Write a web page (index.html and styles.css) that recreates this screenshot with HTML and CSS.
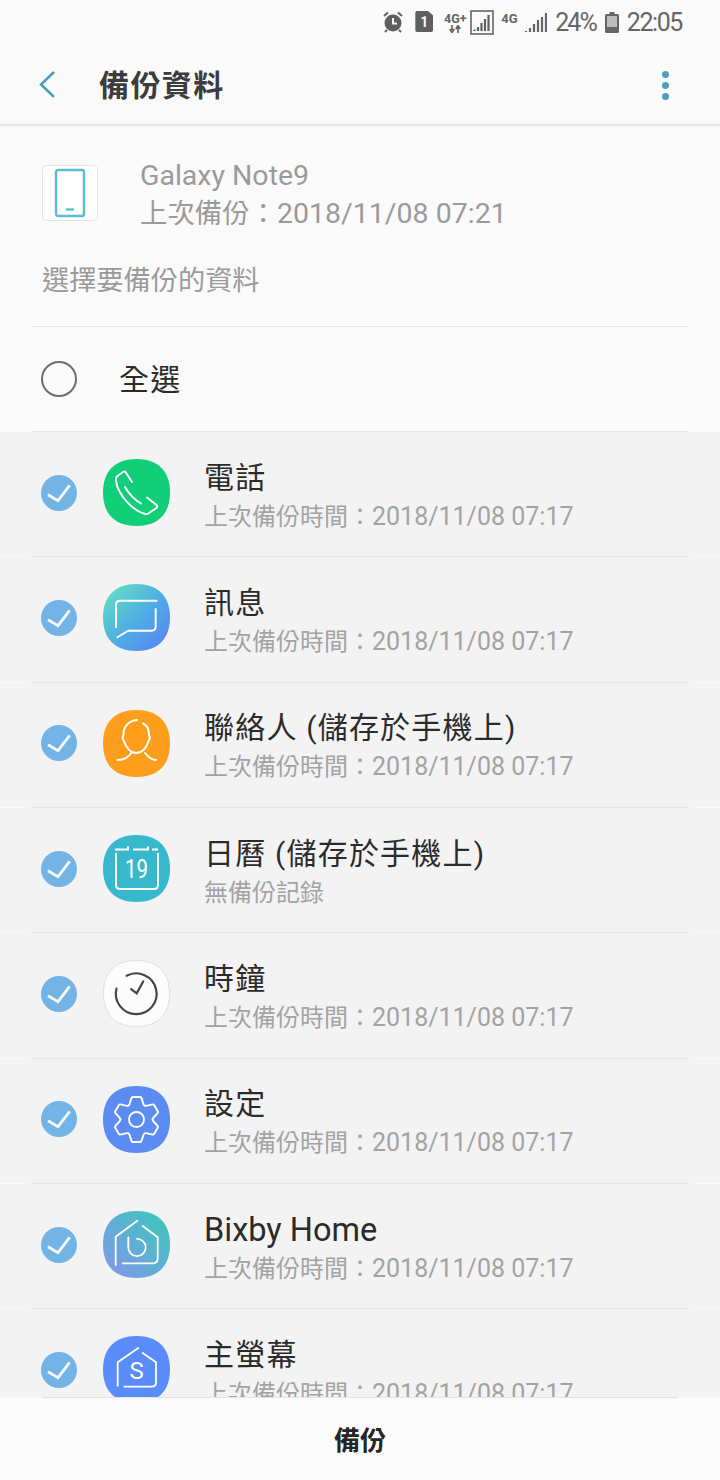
FILE: index.html
```html
<!DOCTYPE html>
<html lang="zh-Hant">

<head>
    <meta charset="UTF-8" />
    <meta name="viewport" content="width=device-width, initial-scale=1.0" />
    <title>備份資料</title>
    <link rel="stylesheet" href="styles.css">
</head>

<body>
    <div class="page">
        <div class="status-bar">
            <svg class="st-alarm" width="22" height="22" viewBox="0 0 22 22">
                <circle cx="11" cy="12" r="8.500" fill="#5f5f5f" />
                <path d="M2 5l4-3.500M20 5l-4-3.500M5 19l-2 2M17 19l2 2" stroke="#5f5f5f" stroke-width="2" fill="none" />
                <path d="M11 7v5.500h4" stroke="#fafafa" stroke-width="2" fill="none" />
            </svg>
            <span class="st-sim">1</span>
            <span class="st-net">
                <span class="st-net-label">4G+</span>
                <svg width="12" height="8" viewBox="0 0 12 8">
                    <path d="M3 0v5M0.800 4L3 7.500 5.200 4M9 8V3M6.800 4L9 0.500 11.200 4" stroke="#5f5f5f" stroke-width="1.600" fill="none" />
                </svg>
            </span>
            <svg class="st-box" width="24" height="25" viewBox="0 0 24 25">
                <rect x="1" y="1" width="22" height="23" fill="none" stroke="#666" stroke-width="1.600" />
                <path d="M4.500 21v-1.500M8 21v-4M11.500 21v-8M15 21V9M18.500 21V5" stroke="#5f5f5f" stroke-width="2.200" fill="none" />
            </svg>
            <span class="st-4g">4G</span>
            <svg class="st-bars" width="22" height="21" viewBox="0 0 22 21">
                <path d="M1 20v-1M5 20v-4M9 20v-8M13 20V8M17 20V5M21 20V1" stroke="#666" stroke-width="2.200" fill="none" />
            </svg>
            <span class="st-text st-pct">24%</span>
            <svg class="st-batt" width="14" height="21" viewBox="0 0 14 21">
                <path d="M4.500 0h5v2h3q1.500 0 1.500 1.500v16q0 1.500-1.500 1.500h-11q-1.500 0-1.500-1.500v-16q0-1.500 1.500-1.500h3z" fill="#666" />
                <rect x="2" y="4" width="10" height="11" fill="#bdbdbd" />
            </svg>
            <span class="st-text st-time">22:05</span>
        </div>

        <header class="app-bar">
            <svg class="back" width="20" height="30" viewBox="0 0 20 30">
                <path d="M16 2L3 14.500 16 27" stroke="#4c9dbd" stroke-width="2.500" fill="none" />
            </svg>
            <h1>備份資料</h1>
            <div class="more"><i></i><i></i><i></i></div>
        </header>

        <section class="summary">
            <div class="device">
                <div class="device-icon">
                    <svg width="32" height="50" viewBox="0 0 32 50">
                        <rect x="2" y="2" width="28" height="46" rx="2" fill="none" stroke="#5cbcd0" stroke-width="2.400" />
                        <path d="M12 41.500h8" stroke="#5cbcd0" stroke-width="2.400" />
                    </svg>
                </div>
                <div class="device-text">
                    <div class="latin">Galaxy Note9</div>
                    <div>上次備份：<span class="latin">2018/11/08 07:21</span></div>
                </div>
            </div>
            <p class="section-label">選擇要備份的資料</p>
            <div class="select-all">
                <span class="radio"></span>
                <span class="select-all-label">全選</span>
            </div>
        </section>

        <ul class="list">
            <li class="row">
                <div class="row-inner">
                    <svg class="check" width="36" height="36" viewBox="0 0 36 36"><circle cx="18" cy="18" r="18" fill="#73b3e6" /><path d="M7 19.700L17 25.700 28.700 10.300" stroke="#f4f9fd" stroke-width="2.800" fill="none" /></svg>
                    <svg class="app-icon" width="67" height="67" viewBox="0 0 67 67">
                        <path d="M33.500 0C55 0 67 12 67 33.500S55 67 33.500 67 0 55 0 33.500 12 0 33.500 0Z" fill="#10cf78" />
                        <path d="M29 23L22.500 13Q21.500 12 20 13L14.500 17Q12.500 18.500 13 22C15 36 30 52 42 55Q44.500 55.500 46 54L53.500 49Q55 47.500 53.500 46L44 38.500M22 28C26 35 32 41 38 44.500" stroke="#fff" stroke-width="1.900" fill="none" stroke-linecap="round" />
                    </svg>
                    <div class="row-text">
                        <div class="row-title">電話</div>
                        <div class="row-sub">上次備份時間：<span class="stamp">2018/11/08 07:17</span></div>
                    </div>
                </div>
            </li>
            <li class="row">
                <div class="row-inner">
                    <svg class="check" width="36" height="36" viewBox="0 0 36 36"><circle cx="18" cy="18" r="18" fill="#73b3e6" /><path d="M7 19.700L17 25.700 28.700 10.300" stroke="#f4f9fd" stroke-width="2.800" fill="none" /></svg>
                    <svg class="app-icon" width="67" height="67" viewBox="0 0 67 67">
                        <defs>
                            <linearGradient id="msgGrad" x1="0" y1="0" x2="1" y2="1">
                                <stop offset="0.100" stop-color="#60dcc4" />
                                <stop offset="0.550" stop-color="#4eaae6" />
                                <stop offset="1" stop-color="#5a80f0" />
                            </linearGradient>
                        </defs>
                        <path d="M33.500 0C55 0 67 12 67 33.500S55 67 33.500 67 0 55 0 33.500 12 0 33.500 0Z" fill="url(#msgGrad)" />
                        <path d="M53.700 16.700H17Q13 16.700 13 20.700V43.300M14.300 53.300L25.300 46.700H48.700Q52.700 46.700 52.700 42.300V25" stroke="#fff" stroke-width="1.900" fill="none" stroke-linecap="round" />
                    </svg>
                    <div class="row-text">
                        <div class="row-title">訊息</div>
                        <div class="row-sub">上次備份時間：<span class="stamp">2018/11/08 07:17</span></div>
                    </div>
                </div>
            </li>
            <li class="row">
                <div class="row-inner">
                    <svg class="check" width="36" height="36" viewBox="0 0 36 36"><circle cx="18" cy="18" r="18" fill="#73b3e6" /><path d="M7 19.700L17 25.700 28.700 10.300" stroke="#f4f9fd" stroke-width="2.800" fill="none" /></svg>
                    <svg class="app-icon" width="67" height="67" viewBox="0 0 67 67">
                        <path d="M33.500 0C55 0 67 12 67 33.500S55 67 33.500 67 0 55 0 33.500 12 0 33.500 0Z" fill="#fd9f1c" />
                        <path d="M34 10C26 10.500 20 17 20.500 25Q18.500 28 21 31C23 38 28 43 33 43C39 43 44 38 45.500 31Q48 28 46 25C46 20 44 15 40 13.500M14.500 50C21 50 26 47 29 42M42 43C45 47 48 50 53 50" stroke="#fff" stroke-width="1.900" fill="none" stroke-linecap="round" />
                    </svg>
                    <div class="row-text">
                        <div class="row-title">聯絡人 (儲存於手機上)</div>
                        <div class="row-sub">上次備份時間：<span class="stamp">2018/11/08 07:17</span></div>
                    </div>
                </div>
            </li>
            <li class="row">
                <div class="row-inner">
                    <svg class="check" width="36" height="36" viewBox="0 0 36 36"><circle cx="18" cy="18" r="18" fill="#73b3e6" /><path d="M7 19.700L17 25.700 28.700 10.300" stroke="#f4f9fd" stroke-width="2.800" fill="none" /></svg>
                    <svg class="app-icon" width="67" height="67" viewBox="0 0 67 67">
                        <path d="M33.500 0C55 0 67 12 67 33.500S55 67 33.500 67 0 55 0 33.500 12 0 33.500 0Z" fill="#38b8cc" />
                        <path d="M12 14.500H25V11.500M30 14.500H45V11.500M49 14.500H55M13 18V50Q13 54 17 54H51Q55 54 55 50V18" stroke="#fff" stroke-width="1.900" fill="none" />
                        <text class="icon-text" x="33.500" y="43.300" font-size="25" text-anchor="middle" textLength="23" lengthAdjust="spacingAndGlyphs" fill="#fff">19</text>
                    </svg>
                    <div class="row-text">
                        <div class="row-title">日曆 (儲存於手機上)</div>
                        <div class="row-sub">無備份記錄</div>
                    </div>
                </div>
            </li>
            <li class="row">
                <div class="row-inner">
                    <svg class="check" width="36" height="36" viewBox="0 0 36 36"><circle cx="18" cy="18" r="18" fill="#73b3e6" /><path d="M7 19.700L17 25.700 28.700 10.300" stroke="#f4f9fd" stroke-width="2.800" fill="none" /></svg>
                    <svg class="app-icon" width="67" height="67" viewBox="-0.500 -0.500 68 68">
                        <path d="M33.500 0C55 0 67 12 67 33.500S55 67 33.500 67 0 55 0 33.500 12 0 33.500 0Z" fill="#fcfcfc" stroke="#dedede" stroke-width="1" />
                        <path d="M23.500 15.500A20.700 20.700 0 1 1 13.200 28.500" stroke="#444" stroke-width="2.200" fill="none" stroke-linecap="round" />
                        <path d="M28 29L33.700 33.300 40.300 21.300" stroke="#444" stroke-width="2.200" fill="none" stroke-linecap="round" />
                    </svg>
                    <div class="row-text">
                        <div class="row-title">時鐘</div>
                        <div class="row-sub">上次備份時間：<span class="stamp">2018/11/08 07:17</span></div>
                    </div>
                </div>
            </li>
            <li class="row">
                <div class="row-inner">
                    <svg class="check" width="36" height="36" viewBox="0 0 36 36"><circle cx="18" cy="18" r="18" fill="#73b3e6" /><path d="M7 19.700L17 25.700 28.700 10.300" stroke="#f4f9fd" stroke-width="2.800" fill="none" /></svg>
                    <svg class="app-icon" width="67" height="67" viewBox="0 0 67 67">
                        <defs>
                            <path id="gearTooth" d="M25.500 19.500C27.500 18.500 27.500 11.500 29.500 11H37.500C39.500 11.500 39.500 18.500 41.500 19.500" stroke="#fff" stroke-width="1.900" fill="none" stroke-linecap="round" />
                        </defs>
                        <path d="M33.500 0C55 0 67 12 67 33.500S55 67 33.500 67 0 55 0 33.500 12 0 33.500 0Z" fill="#5c8cf2" />
                        <use href="#gearTooth" />
                        <use href="#gearTooth" transform="rotate(60 33.500 33.500)" />
                        <use href="#gearTooth" transform="rotate(120 33.500 33.500)" />
                        <use href="#gearTooth" transform="rotate(180 33.500 33.500)" />
                        <use href="#gearTooth" transform="rotate(240 33.500 33.500)" />
                        <use href="#gearTooth" transform="rotate(300 33.500 33.500)" />
                        <circle cx="33.500" cy="33.500" r="7.500" stroke="#fff" stroke-width="1.900" fill="none" />
                    </svg>
                    <div class="row-text">
                        <div class="row-title">設定</div>
                        <div class="row-sub">上次備份時間：<span class="stamp">2018/11/08 07:17</span></div>
                    </div>
                </div>
            </li>
            <li class="row">
                <div class="row-inner">
                    <svg class="check" width="36" height="36" viewBox="0 0 36 36"><circle cx="18" cy="18" r="18" fill="#73b3e6" /><path d="M7 19.700L17 25.700 28.700 10.300" stroke="#f4f9fd" stroke-width="2.800" fill="none" /></svg>
                    <svg class="app-icon" width="67" height="67" viewBox="0 0 67 67">
                        <defs>
                            <linearGradient id="bixbyGrad" x1="1" y1="0" x2="0" y2="1">
                                <stop offset="0.050" stop-color="#3cc8bc" />
                                <stop offset="0.900" stop-color="#7e9ae8" />
                            </linearGradient>
                        </defs>
                        <path d="M33.500 0C55 0 67 12 67 33.500S55 67 33.500 67 0 55 0 33.500 12 0 33.500 0Z" fill="url(#bixbyGrad)" />
                        <path d="M12.700 54V25.700L34.300 9.700M39.700 15L54.700 26.300V47.300Q54.700 52.300 50 52.300H19.700" stroke="#fff" stroke-width="1.800" fill="none" stroke-linecap="round" />
                        <path d="M25.300 26.500V36.500A8.700 8.700 0 1 0 34 27.800" stroke="#fff" stroke-width="1.800" fill="none" stroke-linecap="round" />
                    </svg>
                    <div class="row-text">
                        <div class="row-title row-title-latin">Bixby Home</div>
                        <div class="row-sub">上次備份時間：<span class="stamp">2018/11/08 07:17</span></div>
                    </div>
                </div>
            </li>
            <li class="row">
                <div class="row-inner">
                    <svg class="check" width="36" height="36" viewBox="0 0 36 36"><circle cx="18" cy="18" r="18" fill="#73b3e6" /><path d="M7 19.700L17 25.700 28.700 10.300" stroke="#f4f9fd" stroke-width="2.800" fill="none" /></svg>
                    <svg class="app-icon" width="67" height="67" viewBox="0 0 67 67">
                        <path d="M33.500 0C55 0 67 12 67 33.500S55 67 33.500 67 0 55 0 33.500 12 0 33.500 0Z" fill="#5b8cfb" />
                        <path d="M14.700 49.700V26.300L35.300 12M39.700 17L53 26.300V46.300Q53 50.700 48.700 50.700H21.300" stroke="#fff" stroke-width="1.800" fill="none" stroke-linecap="round" />
                        <text class="icon-text" x="33.500" y="43" font-size="24" text-anchor="middle" fill="#fff">S</text>
                    </svg>
                    <div class="row-text">
                        <div class="row-title">主螢幕</div>
                        <div class="row-sub">上次備份時間：<span class="stamp">2018/11/08 07:17</span></div>
                    </div>
                </div>
            </li>
        </ul>

        <footer class="footer">
            <button class="footer-btn" type="button">備份</button>
        </footer>
    </div>
</body>

</html>
```

FILE: styles.css
```css
* {
    padding: 0;
    margin: 0;
    box-sizing: border-box;
}

body {
    background: #fafafa;
    font-family: Roboto, "Noto Sans CJK TC", sans-serif;
}

.page {
    display: flex;
    flex-direction: column;
    width: 720px;
    height: 1480px;
    overflow: hidden;
}

/* status bar */
.status-bar {
    display: flex;
    align-items: center;
    height: 46px;
    padding-right: 38px;
    color: #666;
    flex-shrink: 0;
}

.st-alarm {
    margin-left: auto;
    margin-top: -2px;
}

.st-sim {
    display: flex;
    align-items: center;
    justify-content: center;
    width: 18px;
    height: 21px;
    margin-left: 11px;
    margin-top: -3px;
    background: #5f5f5f;
    color: #fafafa;
    font-size: 14px;
    font-weight: 700;
    border-radius: 2px;
    clip-path: polygon(0 0, 70% 0, 100% 22%, 100% 100%, 0 100%);
}

.st-net {
    display: flex;
    flex-direction: column;
    align-items: center;
    width: 22px;
    margin-left: 11px;
    margin-top: -2px;
}

.st-net-label {
    font-size: 12.5px;
    line-height: 13px;
    font-weight: 700;
    color: #666;
    white-space: nowrap;
}

.st-box {
    margin-left: 4px;
    margin-top: -2px;
}

.st-4g {
    width: 16px;
    margin-left: 7px;
    margin-top: -9px;
    font-size: 13px;
    font-weight: 700;
    white-space: nowrap;
}

.st-bars {
    margin-left: 8px;
    margin-top: -1px;
}

.st-text {
    font-size: 25px;
    line-height: 30px;
    color: #666;
}

.st-pct {
    margin-left: 8px;
    letter-spacing: -2px;
}

.st-batt {
    margin-left: 9px;
    margin-top: -2px;
}

.st-time {
    margin-left: 8px;
    letter-spacing: -1.4px;
}

/* app bar */
.app-bar {
    display: flex;
    align-items: center;
    height: 80px;
    padding-left: 38px;
    padding-right: 51px;
    border-bottom: 2px solid #e6e6e6;
    flex-shrink: 0;
}

.app-bar h1 {
    margin-left: 41px;
    margin-top: -4px;
    font-size: 30px;
    font-weight: 700;
    color: #3c3c3c;
    letter-spacing: 1.4px;
}

.more {
    display: flex;
    flex-direction: column;
    gap: 4px;
    margin-left: auto;
}

.more i {
    display: block;
    width: 7px;
    height: 7px;
    border-radius: 50%;
    background: #4d9fc0;
}

/* summary */
.summary {
    flex-shrink: 0;
}

.device {
    display: flex;
    align-items: flex-start;
    gap: 42px;
    padding: 31px 42px 0;
}

.device-icon {
    display: flex;
    align-items: center;
    justify-content: center;
    width: 56px;
    height: 56px;
    margin-top: 8px;
    background: #fff;
    border: 1px solid #e4e4e4;
    border-radius: 5px;
}

.device-text {
    font-size: 27.4px;
    line-height: 38px;
    color: #9a9a9a;
}

.latin {
    font-size: 28.5px;
}

.section-label {
    padding: 28px 42px 0;
    font-size: 27.2px;
    line-height: 40px;
    color: #9a9a9a;
}

.select-all {
    display: flex;
    align-items: center;
    gap: 42px;
    height: 105px;
    margin: 25px 31px 0;
    padding-left: 10px;
    border-top: 1px solid #e5e5e5;
}

.radio {
    width: 36px;
    height: 36px;
    border: 2px solid #6d6d6d;
    border-radius: 50%;
}

.select-all-label {
    margin-top: -4px;
    font-size: 30px;
    letter-spacing: 1.2px;
    color: #2b2b2b;
}

/* list */
.list {
    flex: 1;
    min-height: 0;
    overflow: hidden;
    list-style: none;
    background: #f3f3f3;
}

.row {
    height: 125.33px;
    padding: 0 31px;
    border-top: 1px solid #f9f9f9;
}

.row-inner {
    display: flex;
    align-items: center;
    height: 100%;
    padding-left: 10px;
    padding-bottom: 2px;
    margin-top: -1px;
    border-top: 1px solid #e6e6e6;
}

.check {
    flex-shrink: 0;
}

.app-icon {
    flex-shrink: 0;
    margin-left: 26px;
}

.row-text {
    margin-left: 34px;
    padding-top: 9px;
}

.row-title {
    font-size: 30px;
    line-height: 38px;
    letter-spacing: 1.2px;
    color: #2b2b2b;
}

.row-title-latin {
    font-size: 32.5px;
    letter-spacing: 0;
}

.row-sub {
    margin-top: 1px;
    font-size: 24px;
    line-height: 38px;
    color: #a3a3a3;
}

.stamp {
    font-size: 25px;
}

.icon-text {
    font-family: Roboto, sans-serif;
}

/* footer */
.footer {
    flex-shrink: 0;
    height: 83px;
    padding: 0 42px;
    background: #fbfbfb;
}

.footer-btn {
    display: block;
    width: 100%;
    height: 100%;
    padding-bottom: 2px;
    background: none;
    border: none;
    border-top: 1px solid #e4e4e4;
    font-family: inherit;
    font-size: 26px;
    font-weight: 700;
    color: #252525;
}
```
